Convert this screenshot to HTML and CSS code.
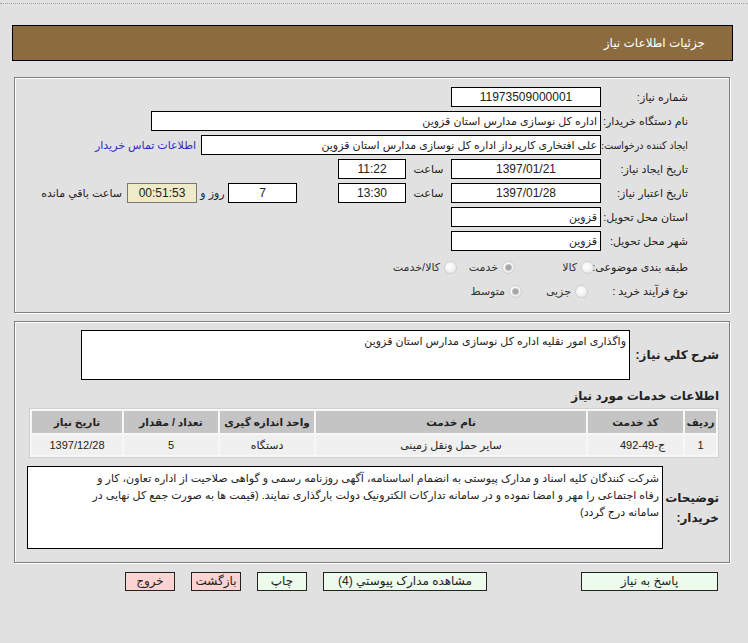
FILE: index.html
```html
<!DOCTYPE html>
<html lang="fa" dir="rtl">
<head>
<meta charset="utf-8">
<title>جزئیات اطلاعات نیاز</title>
<link rel="stylesheet" href="styles.css">
</head>
<body>
<div class="topline"></div>
<div class="titlebar">جزئیات اطلاعات نیاز</div>

<div class="box box1">
  <div class="row">
    <div class="lbl">شماره نیاز:</div>
    <div class="field w150 center">11973509000001</div>
  </div>
  <div class="row">
    <div class="lbl">نام دستگاه خریدار:</div>
    <div class="field w450">اداره کل نوسازی مدارس استان قزوین</div>
  </div>
  <div class="row">
    <div class="lbl tight">ایجاد کننده درخواست:</div>
    <div class="field w400">علی افتخاری کارپرداز اداره کل نوسازی مدارس استان قزوین</div>
    <a class="contact" href="#">اطلاعات تماس خریدار</a>
  </div>
  <div class="row">
    <div class="lbl">تاریخ ایجاد نیاز:</div>
    <div class="field w150 center">1397/01/21</div>
    <span class="saat">ساعت</span>
    <div class="field w68 center">11:22</div>
  </div>
  <div class="row">
    <div class="lbl">تاریخ اعتبار نیاز:</div>
    <div class="field w150 center">1397/01/28</div>
    <span class="saat">ساعت</span>
    <div class="field w68 center">13:30</div>
    <div class="field w69 center days">7</div>
    <span class="rooz">روز و</span>
    <div class="remain">00:51:53</div>
    <span class="remain-lbl">ساعت باقي مانده</span>
  </div>
  <div class="row">
    <div class="lbl">استان محل تحویل:</div>
    <div class="field w150">قزوین</div>
  </div>
  <div class="row">
    <div class="lbl">شهر محل تحویل:</div>
    <div class="field w150">قزوین</div>
  </div>
  <div class="row row-radio1">
    <div class="lbl">طبقه بندی موضوعی:</div>
    <span class="opt opt-a"><span class="radio"></span>کالا</span>
    <span class="opt opt-b"><span class="radio on"></span>خدمت</span>
    <span class="opt"><span class="radio"></span>کالا/خدمت</span>
  </div>
  <div class="row">
    <div class="lbl">نوع فرآیند خرید :</div>
    <span class="opt opt-c"><span class="radio"></span>جزیی</span>
    <span class="opt"><span class="radio on"></span>متوسط</span>
  </div>
</div>

<div class="box box2">
  <div class="desc-row">
    <div class="blbl sharh">شرح کلي نیاز:</div>
    <div class="area area1">واگذاری امور نقلیه اداره کل نوسازی مدارس استان قزوین<span class="grip"></span></div>
  </div>
  <div class="heading">اطلاعات خدمات مورد نیاز</div>
  <table class="items">
    <colgroup>
      <col class="c1"><col class="c2"><col class="c3"><col class="c4"><col class="c5"><col class="c6">
    </colgroup>
    <thead>
      <tr>
        <th>ردیف</th>
        <th>کد خدمت</th>
        <th>نام خدمت</th>
        <th>واحد اندازه گیری</th>
        <th>تعداد / مقدار</th>
        <th>تاریخ نیاز</th>
      </tr>
    </thead>
    <tbody>
      <tr>
        <td>1</td>
        <td class="code">ج-49-492</td>
        <td>سایر حمل ونقل زمینی</td>
        <td>دستگاه</td>
        <td>5</td>
        <td>1397/12/28</td>
      </tr>
    </tbody>
  </table>
  <div class="desc-row">
    <div class="blbl tozih">توضیحات خریدار:</div>
    <div class="area area2">شرکت کنندگان کلیه اسناد و مدارک پیوستی به انضمام اساسنامه، آگهی روزنامه رسمی و گواهی صلاحیت از اداره تعاون، کار و<br>رفاه اجتماعی را مهر و امضا نموده و در سامانه تدارکات الکترونیک دولت بارگذاری نمایند. (قیمت ها به صورت جمع کل نهایی در<br>سامانه درج گردد)<span class="grip"></span></div>
  </div>
</div>

<div class="buttons">
  <span class="btn green b1">پاسخ به نیاز</span>
  <span class="btn green b2">مشاهده مدارک پیوستي (4)</span>
  <span class="btn green b3">چاپ</span>
  <span class="btn pink b3">بازگشت</span>
  <span class="btn pink b3">خروج</span>
</div>
</body>
</html>
```

FILE: styles.css
```css
* { box-sizing: border-box; }
html, body { margin: 0; padding: 0; }
body {
  width: 748px;
  height: 643px;
  overflow: hidden;
  background: #e1e1e1;
  font-family: "Liberation Sans", "DejaVu Sans", sans-serif;
  font-size: 11px;
  color: #222;
}
.topline {
  height: 4px;
  border-bottom: 1px dotted #a0a0a0;
}
.titlebar {
  margin: 21px 15px 0 12px;
  height: 36px;
  background: #8c6c3e;
  border: 1px solid #000;
  color: #fff;
  font-size: 12px;
  line-height: 34px;
  padding-right: 27px;
}
.box {
  margin: 0 18px 0 14px;
  border: 1px solid #808080;
  box-shadow: inset 1px 1px 0 #fff, 1px 1px 0 #fff;
}
.box1 {
  margin-top: 16px;
  padding: 7px 41px 9px 0;
}
.row {
  display: flex;
  align-items: center;
  height: 24px;
  white-space: nowrap;
}
.lbl {
  width: 87px;
  flex: none;
  text-align: right;
}
.lbl.tight {
  font-family: "DejaVu Sans Condensed", "Liberation Sans", "DejaVu Sans", sans-serif;
  font-size: 10.5px;
}
.field {
  flex: none;
  height: 20px;
  border: 1px solid #000;
  background: #fff;
  line-height: 18px;
  padding: 0 3px;
  overflow: hidden;
  white-space: nowrap;
  text-align: right;
}
.center { text-align: center; font-size: 12px; }
.w150 { width: 150px; }
.w450 { width: 450px; }
.w400 { width: 400px; }
.w68 { width: 68px; }
.w69 { width: 69px; }
.contact {
  margin-right: 5px;
  color: #2b2bc4;
  text-decoration: none;
}
.saat {
  width: 45px;
  text-align: center;
  flex: none;
}
.days { margin-right: 41px; }
.rooz {
  width: 31px;
  text-align: center;
  flex: none;
}
.remain {
  width: 70px;
  height: 20px;
  flex: none;
  border: 1px solid #777;
  background: #efebc9;
  text-align: center;
  line-height: 18px;
  font-size: 12px;
}
.remain-lbl { margin-right: 5px; }
.row-radio1 { margin-top: 2px; }
.opt {
  display: flex;
  align-items: center;
  flex: none;
  color: #333;
}
.opt-a { width: 86px; padding-right: 7px; }
.opt-b { width: 58px; }
.opt-c { width: 79px; padding-right: 13px; }
.radio {
  width: 13px;
  height: 13px;
  border-radius: 50%;
  border: 1px solid #cfcfcf;
  background: radial-gradient(circle at 40% 40%, #ffffff 0, #f1f1f1 55%, #dcdcdc 100%);
  margin-left: 4px;
  position: relative;
  flex: none;
}
.radio.on::after {
  content: "";
  position: absolute;
  left: 3px;
  top: 3px;
  width: 5px;
  height: 5px;
  border-radius: 50%;
  background: #a5a5a5;
  box-shadow: 0 0 0 1px #c4c4c4;
}
.box2 {
  margin-top: 8px;
  padding: 8px 10px 13px 0;
}
.desc-row {
  display: flex;
  align-items: center;
}
.blbl {
  flex: none;
  font-weight: bold;
  font-size: 12px;
  color: #222;
}
.sharh { width: 89px; }
.tozih { width: 56px; line-height: 20px; }
.area {
  position: relative;
  flex: none;
  background: #fff;
  border: 1px solid #000;
  padding: 2px 3px;
  font-size: 11px;
  color: #222;
}
.area1 { width: 549px; height: 50px; line-height: 16px; }
.area2 { width: 636px; height: 83px; line-height: 17px; padding-top: 3px; white-space: nowrap; }
.grip {
  position: absolute;
  left: 2px;
  bottom: 2px;
  width: 5px;
  height: 7px;
  background-image: radial-gradient(circle, #c8c8c8 0.6px, transparent 0.7px);
  background-size: 2px 2px;
}
.heading {
  margin-top: 8px;
  height: 16px;
  line-height: 16px;
  font-weight: bold;
  font-size: 12px;
}
.items {
  margin: 4px 0 8px 0;
  width: 690px;
  table-layout: fixed;
  border-collapse: separate;
  border-spacing: 2px;
  border: 1px solid #d0d0d0;
  background: #f7f7f7;
  font-size: 11px;
}
.items th {
  background: #c4c4c4;
  height: 22px;
  font-weight: bold;
  font-size: 10.5px;
  color: #222;
  padding: 0;
  white-space: nowrap;
  overflow: hidden;
}
.items td {
  background: #f0f0f0;
  height: 20px;
  text-align: center;
  padding: 0;
  white-space: nowrap;
}
.items .c1 { width: 31px; }
.items .c2 { width: 95px; }
.items .c3 { width: 270px; }
.items .c4, .items .c5 { width: 94px; }
.items .c6 { width: 90px; }
.items td.code { text-align: right; padding-right: 18px; }
.buttons {
  display: flex;
  margin-top: 9px;
  padding-right: 30px;
}
.btn {
  display: block;
  height: 19px;
  border: 1px solid #222;
  text-align: center;
  line-height: 17px;
  font-size: 12px;
  color: #222;
  flex: none;
  margin-left: 16px;
}
.green { background: #ecfbec; }
.pink { background: #fcd3d3; }
.b1 { width: 137px; margin-left: 94px; }
.b2 { width: 164px; }
.b3 { width: 50px; }
```
